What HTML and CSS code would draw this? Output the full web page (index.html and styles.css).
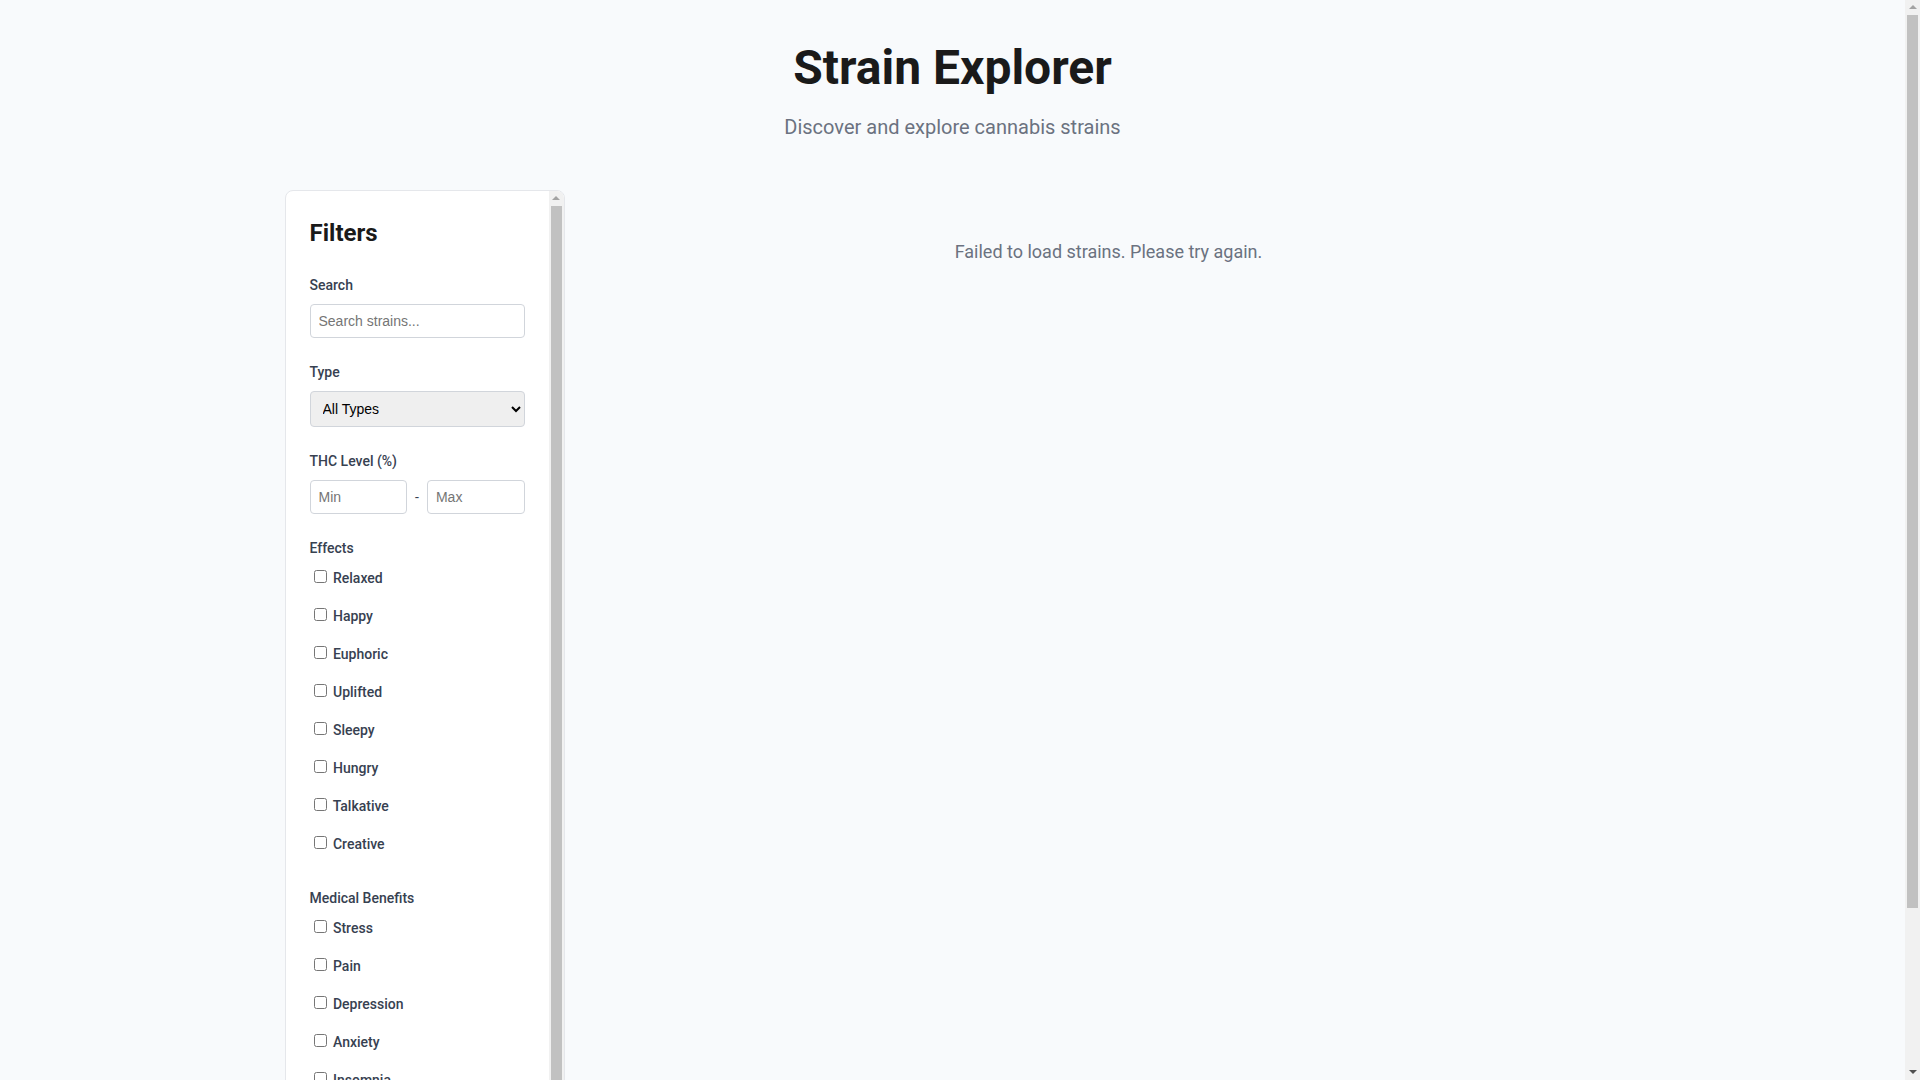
FILE: index.html
```html
<!DOCTYPE html>
<html>
<head>
    <title>Strain Explorer</title>
    <link rel="stylesheet" href="styles.css">
</head>
<body>
    <div class="container">
        <header class="header">
            <h1>Strain Explorer</h1>
            <p class="subtitle">Discover and explore cannabis strains</p>
        </header>

        <div class="layout">
            <aside class="filters">
                <h2>Filters</h2>

                <div class="filter-group">
                    <label for="search">Search</label>
                    <input type="text" id="search" placeholder="Search strains...">
                </div>

                <div class="filter-group">
                    <label for="type">Type</label>
                    <select id="type">
                        <option value="">All Types</option>
                        <option value="indica">Indica</option>
                        <option value="sativa">Sativa</option>
                        <option value="hybrid">Hybrid</option>
                    </select>
                </div>

                <div class="filter-group">
                    <label>THC Level (%)</label>
                    <div class="range">
                        <input type="number" id="thc-min" placeholder="Min">
                        <span>-</span>
                        <input type="number" id="thc-max" placeholder="Max">
                    </div>
                </div>

                <div class="filter-group checks">
                    <label>Effects</label>
                    <div class="checkbox-list">
                        <label class="checkbox-item"><input type="checkbox" value="relaxed"> Relaxed</label>
                        <label class="checkbox-item"><input type="checkbox" value="happy"> Happy</label>
                        <label class="checkbox-item"><input type="checkbox" value="euphoric"> Euphoric</label>
                        <label class="checkbox-item"><input type="checkbox" value="uplifted"> Uplifted</label>
                        <label class="checkbox-item"><input type="checkbox" value="sleepy"> Sleepy</label>
                        <label class="checkbox-item"><input type="checkbox" value="hungry"> Hungry</label>
                        <label class="checkbox-item"><input type="checkbox" value="talkative"> Talkative</label>
                        <label class="checkbox-item"><input type="checkbox" value="creative"> Creative</label>
                    </div>
                </div>

                <div class="filter-group checks">
                    <label>Medical Benefits</label>
                    <div class="checkbox-list">
                        <label class="checkbox-item"><input type="checkbox" value="stress"> Stress</label>
                        <label class="checkbox-item"><input type="checkbox" value="pain"> Pain</label>
                        <label class="checkbox-item"><input type="checkbox" value="depression"> Depression</label>
                        <label class="checkbox-item"><input type="checkbox" value="anxiety"> Anxiety</label>
                        <label class="checkbox-item"><input type="checkbox" value="insomnia"> Insomnia</label>
                        <label class="checkbox-item"><input type="checkbox" value="nausea"> Nausea</label>
                        <label class="checkbox-item"><input type="checkbox" value="appetite"> Lack of Appetite</label>
                    </div>
                </div>

                <button class="reset-button">Reset Filters</button>

                <!-- scrollbar of the filter panel -->
                <div class="scrollbar panel-scroll">
                    <span class="arrow up"></span>
                    <div class="thumb"></div>
                </div>
            </aside>

            <main class="results">
                <div class="message">Failed to load strains. Please try again.</div>
            </main>
        </div>
    </div>

    <!-- page scrollbar -->
    <div class="scrollbar page-scroll">
        <span class="arrow up"></span>
        <div class="thumb"></div>
        <span class="arrow down"></span>
    </div>
</body>
</html>
```

FILE: styles.css
```css
* {
    box-sizing: border-box;
}

body {
    margin: 0 15px 0 0;
    font-family: Roboto, "Liberation Sans", sans-serif;
    line-height: 1.5;
    background-color: #f8fafc;
    color: #1a1a1a;
}

.container {
    max-width: 1400px;
    margin: 0 auto;
    padding: 2rem;
}

.header {
    text-align: center;
    margin-bottom: 3rem;
}

.header h1 {
    font-size: 3rem;
    font-weight: 700;
    margin: 0 0 0.5rem;
    color: #1a1a1a;
}

.subtitle {
    margin: 0;
    font-size: 1.25rem;
    color: #6b7280;
}

.layout {
    display: grid;
    grid-template-columns: 280px 1fr;
    gap: 2rem;
    align-items: start;
}

.filters {
    position: relative;
    background-color: #ffffff;
    border: 1px solid #e5e7eb;
    border-radius: 8px;
    padding: 1.5rem calc(1.5rem + 15px) 1.5rem 1.5rem;
    max-height: calc(100vh - 2rem);
    overflow: hidden;
}

.filters h2 {
    font-size: 1.5rem;
    margin: 0 0 1.5rem;
}

.filter-group {
    margin-bottom: 1.5rem;
}

.filter-group.checks {
    margin-bottom: 2rem;
}

.filter-group > label {
    display: block;
    margin-bottom: 0.5rem;
    font-size: 14px;
    font-weight: 500;
    color: #374151;
}

.filter-group input[type="text"],
.filter-group input[type="number"],
.filter-group select {
    width: 100%;
    padding: 0.5rem;
    font-family: "Liberation Sans", Arial, sans-serif;
    font-size: 14px;
    border: 1px solid #d1d5db;
    border-radius: 4px;
    background-color: #ffffff;
}

.filter-group select {
    background-color: #efefef;
    color: #000000;
}

.range {
    display: flex;
    align-items: center;
    gap: 0.5rem;
    font-size: 14px;
    color: #374151;
}

.range input[type="number"] {
    flex: 1;
    min-width: 0;
}

.checkbox-list {
    display: flex;
    flex-direction: column;
    gap: 15px;
}

.checkbox-item {
    display: block;
    line-height: 23px;
    font-size: 14px;
    font-weight: 500;
    color: #374151;
}

.checkbox-item input {
    margin: 0 3px 0 4px;
}

.reset-button {
    width: 100%;
    padding: 0.75rem;
    font-size: 14px;
    font-family: Roboto, sans-serif;
    border: none;
    border-radius: 4px;
    background-color: #e5e7eb;
    color: #374151;
}

.message {
    padding: 3rem;
    text-align: center;
    font-size: 1.125rem;
    color: #6b7280;
}

/* classic scrollbars */
.scrollbar {
    width: 15px;
    background-color: #f1f1f1;
    display: flex;
    flex-direction: column;
    align-items: center;
}

.page-scroll {
    position: fixed;
    top: 0;
    right: 0;
    height: 100vh;
}

.panel-scroll {
    position: absolute;
    top: 0;
    right: 0;
    bottom: 0;
}

.scrollbar .thumb {
    width: 11px;
    background-color: #c1c1c1;
}

.page-scroll .thumb {
    height: 893px;
}

.panel-scroll .thumb {
    flex: 1;
    margin-bottom: 40px;
}

.arrow {
    width: 0;
    height: 0;
    margin: 5px 0 6px;
    border-left: 4px solid transparent;
    border-right: 4px solid transparent;
}

.arrow.up {
    border-bottom: 4px solid #a3a3a3;
}

.arrow.down {
    margin-top: auto;
    border-top: 4px solid #505050;
}
```
